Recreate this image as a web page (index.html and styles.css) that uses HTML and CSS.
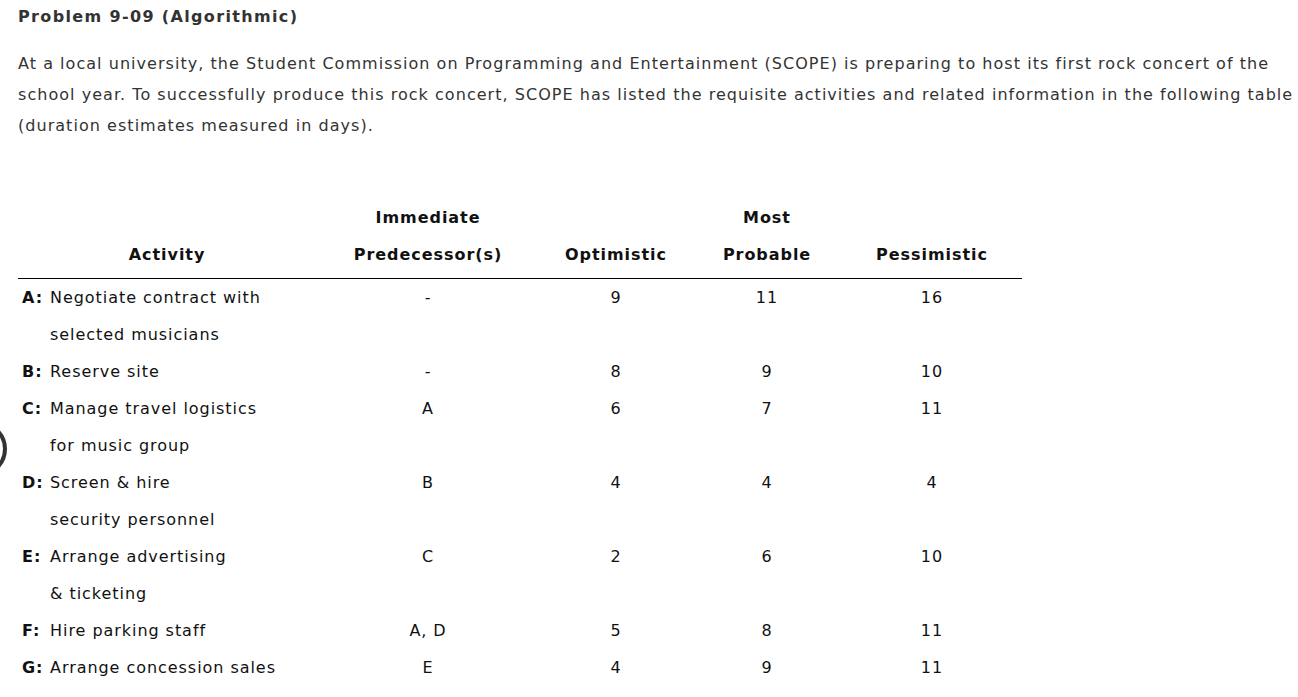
FILE: index.html
```html
<!DOCTYPE html>
<html>
<head>
<meta charset="utf-8">
<link rel="stylesheet" href="styles.css">
</head>
<body>
<div class="page">
  <h1 class="title">Problem 9-09 (Algorithmic)</h1>
  <p class="intro">At a local university, the Student Commission on Programming and Entertainment (SCOPE) is preparing to host its first rock concert of the school year. To successfully produce this rock concert, SCOPE has listed the requisite activities and related information in the following table (duration estimates measured in days).</p>
  <table class="data">
    <colgroup>
      <col class="c-act"><col class="c-pred"><col class="c-opt"><col class="c-most"><col class="c-pess">
    </colgroup>
    <thead>
      <tr class="h1"><th></th><th>Immediate</th><th></th><th>Most</th><th></th></tr>
      <tr class="h2"><th>Activity</th><th>Predecessor(s)</th><th>Optimistic</th><th>Probable</th><th>Pessimistic</th></tr>
    </thead>
    <tbody>
      <tr><td class="act"><b>A:</b>Negotiate contract with</td><td>-</td><td>9</td><td>11</td><td>16</td></tr>
      <tr><td class="act"><b></b>selected musicians</td><td></td><td></td><td></td><td></td></tr>
      <tr><td class="act"><b>B:</b>Reserve site</td><td>-</td><td>8</td><td>9</td><td>10</td></tr>
      <tr><td class="act"><b>C:</b>Manage travel logistics</td><td>A</td><td>6</td><td>7</td><td>11</td></tr>
      <tr><td class="act"><b></b>for music group</td><td></td><td></td><td></td><td></td></tr>
      <tr><td class="act"><b>D:</b>Screen &amp; hire</td><td>B</td><td>4</td><td>4</td><td>4</td></tr>
      <tr><td class="act"><b></b>security personnel</td><td></td><td></td><td></td><td></td></tr>
      <tr><td class="act"><b>E:</b>Arrange advertising</td><td>C</td><td>2</td><td>6</td><td>10</td></tr>
      <tr><td class="act"><b></b>&amp; ticketing</td><td></td><td></td><td></td><td></td></tr>
      <tr><td class="act"><b>F:</b>Hire parking staff</td><td>A, D</td><td>5</td><td>8</td><td>11</td></tr>
      <tr><td class="act"><b>G:</b>Arrange concession sales</td><td>E</td><td>4</td><td>9</td><td>11</td></tr>
    </tbody>
  </table>
</div>
<div class="side-btn"></div>
</body>
</html>
```
FILE: styles.css
```css
html, body {
  margin: 0;
  padding: 0;
  background: #fff;
}
body {
  font-family: "DejaVu Sans", Verdana, sans-serif;
  color: #333;
  overflow: hidden;
}
.page {
  padding: 5px 0 0 18px;
}
.title {
  margin: 0;
  font-size: 16px;
  font-weight: bold;
  line-height: 24px;
  letter-spacing: 1.35px;
  color: #333;
}
.intro {
  margin: 19px 0 0 0;
  font-size: 16px;
  line-height: 31px;
  letter-spacing: 1.04px;
  color: #333;
}
.data {
  margin-top: 58px;
  border-collapse: collapse;
  table-layout: fixed;
  width: 1004px;
  font-size: 16px;
  letter-spacing: 0.95px;
  color: #111;
}
.c-act { width: 298px; }
.c-pred { width: 224px; }
.c-opt { width: 152px; }
.c-most { width: 150px; }
.c-pess { width: 180px; }
.data th {
  font-weight: bold;
  text-align: center;
  line-height: 37px;
  padding: 0;
}
.data .h2 th {
  padding-bottom: 5px;
  border-bottom: 1px solid #000;
}
.data td {
  text-align: center;
  line-height: 37px;
  padding: 0;
  white-space: nowrap;
}
.data td.act {
  text-align: left;
  padding-left: 4px;
}
.act b {
  display: inline-block;
  width: 28px;
}
.side-btn {
  position: absolute;
  left: -49px;
  top: 421px;
  width: 56px;
  height: 56px;
  box-sizing: border-box;
  border: 4px solid #333;
  border-radius: 50%;
}
```
